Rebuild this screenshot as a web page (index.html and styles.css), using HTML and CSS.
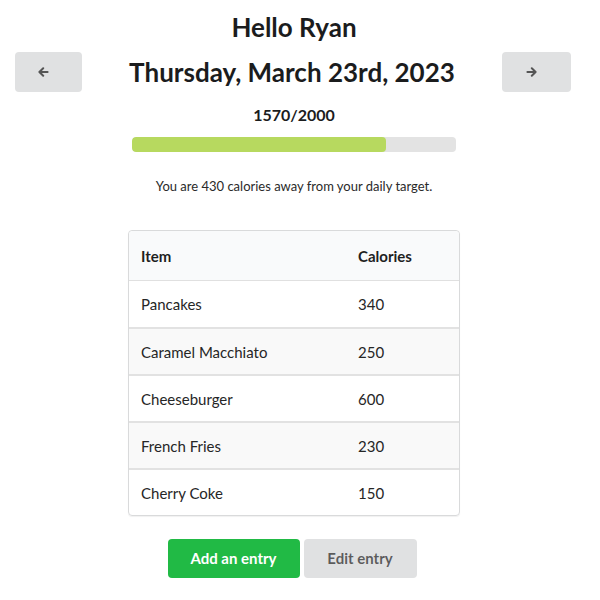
FILE: index.html
```html
<!DOCTYPE html>
<html lang="en">
<head>
<meta charset="utf-8">
<title>Calorie tracker</title>
<link rel="stylesheet" href="styles.css">
</head>
<body>
<div class="page">
  <h1 class="hello">Hello Ryan</h1>
  <div class="daterow">
    <button class="nav-btn" aria-label="Previous day">
      <svg width="11" height="10" viewBox="0 0 11 10"><path d="M9.6 5H1.8M5.2 1.3L1.4 5l3.8 3.7" fill="none" stroke="#555" stroke-width="2" stroke-linecap="round" stroke-linejoin="round"/></svg>
    </button>
    <h1 class="date">Thursday, March 23rd, 2023</h1>
    <button class="nav-btn nav-next" aria-label="Next day">
      <svg width="11" height="10" viewBox="0 0 11 10"><path d="M1.4 5h7.8M5.8 1.3L9.6 5 5.8 8.7" fill="none" stroke="#555" stroke-width="2" stroke-linecap="round" stroke-linejoin="round"/></svg>
    </button>
  </div>
  <div class="count">1570/2000</div>
  <div class="progress"><div class="bar" style="width:78.5%"></div></div>
  <p class="remaining">You are 430 calories away from your daily target.</p>
  <table class="entries">
    <thead>
      <tr><th class="c1">Item</th><th>Calories</th></tr>
    </thead>
    <tbody>
      <tr><td>Pancakes</td><td>340</td></tr>
      <tr class="alt"><td>Caramel Macchiato</td><td>250</td></tr>
      <tr><td>Cheeseburger</td><td>600</td></tr>
      <tr class="alt"><td>French Fries</td><td>230</td></tr>
      <tr><td>Cherry Coke</td><td>150</td></tr>
    </tbody>
  </table>
  <div class="actions">
    <button class="btn btn-green">Add an entry</button>
    <button class="btn btn-grey">Edit entry</button>
  </div>
</div>
</body>
</html>
```
FILE: styles.css
```css
* { box-sizing: border-box; }
html, body { margin: 0; padding: 0; background: #fff; }
body {
  font-family: Lato, "Helvetica Neue", Arial, sans-serif;
  color: rgba(0,0,0,.87);
}
.page {
  width: 558px;
  margin-left: 15px;
  padding-top: 10px;
  display: flex;
  flex-direction: column;
  align-items: center;
}
.hello, .date {
  margin: 0;
  font-size: 26px;
  font-weight: 700;
  line-height: 34px;
  color: #1b1c1d;
}
.daterow {
  margin-top: 8px;
  width: 100%;
  height: 40px;
  padding-right: 2px;
  display: flex;
  align-items: center;
  justify-content: space-between;
}
.nav-btn {
  width: 67px;
  height: 40px;
  border: 0;
  border-radius: 4px;
  background: #e0e1e2;
  display: flex;
  align-items: center;
  justify-content: center;
  padding: 0 10px 0 0;
}
.nav-next { width: 69px; }
.nav-btn svg { display: block; }
.count {
  margin-top: 13px;
  font-size: 16px;
  line-height: 20px;
  font-weight: 700;
  color: #1b1c1d;
}
.progress {
  margin-top: 12px;
  width: 324px;
  height: 15px;
  background: #e3e3e3;
  border-radius: 4px;
  overflow: hidden;
}
.bar {
  height: 100%;
  background: #b7d95f;
  border-radius: 4px;
}
.remaining {
  margin: 26px 0 0;
  font-size: 13px;
  line-height: 16px;
  color: #2a2a2a;
}
.entries {
  margin-top: 36px;
  width: 332px;
  border-collapse: separate;
  border-spacing: 0;
  border: 1px solid #d9dadb;
  border-radius: 4px;
  box-shadow: 0 1px 1px rgba(0,0,0,.06);
  font-size: 15px;
  text-align: left;
}
.entries th, .entries td {
  padding: 0 12px;
  line-height: 20px;
}
.entries th {
  height: 50px;
  background: #f9fafb;
  font-weight: 700;
  color: #1f1f1f;
  border-bottom: 1px solid #e0e0e0;
}
.entries thead th:first-child { border-top-left-radius: 4px; }
.entries thead th:last-child { border-top-right-radius: 4px; }
.entries .c1 { width: 217px; }
.entries td {
  height: 47px;
  border-top: 2px solid #e2e2e2;
  color: #262626;
}
.entries tbody tr:first-child td { border-top: 0; height: 46px; }
.entries tr.alt td { background: #f9f9f9; }
.actions {
  margin-top: 23px;
  padding-right: 4px;
  display: flex;
  gap: 4px;
}
.btn {
  font-family: Lato, "Helvetica Neue", Arial, sans-serif;
  font-size: 15px;
  font-weight: 700;
  height: 39px;
  padding: 0 22px;
  border: 0;
  border-radius: 4px;
  line-height: 15px;
}
.btn-green { background: #21ba45; color: #fff; width: 132px; }
.btn-grey { background: #e0e1e2; color: rgba(0,0,0,.6); width: 113px; }
```
